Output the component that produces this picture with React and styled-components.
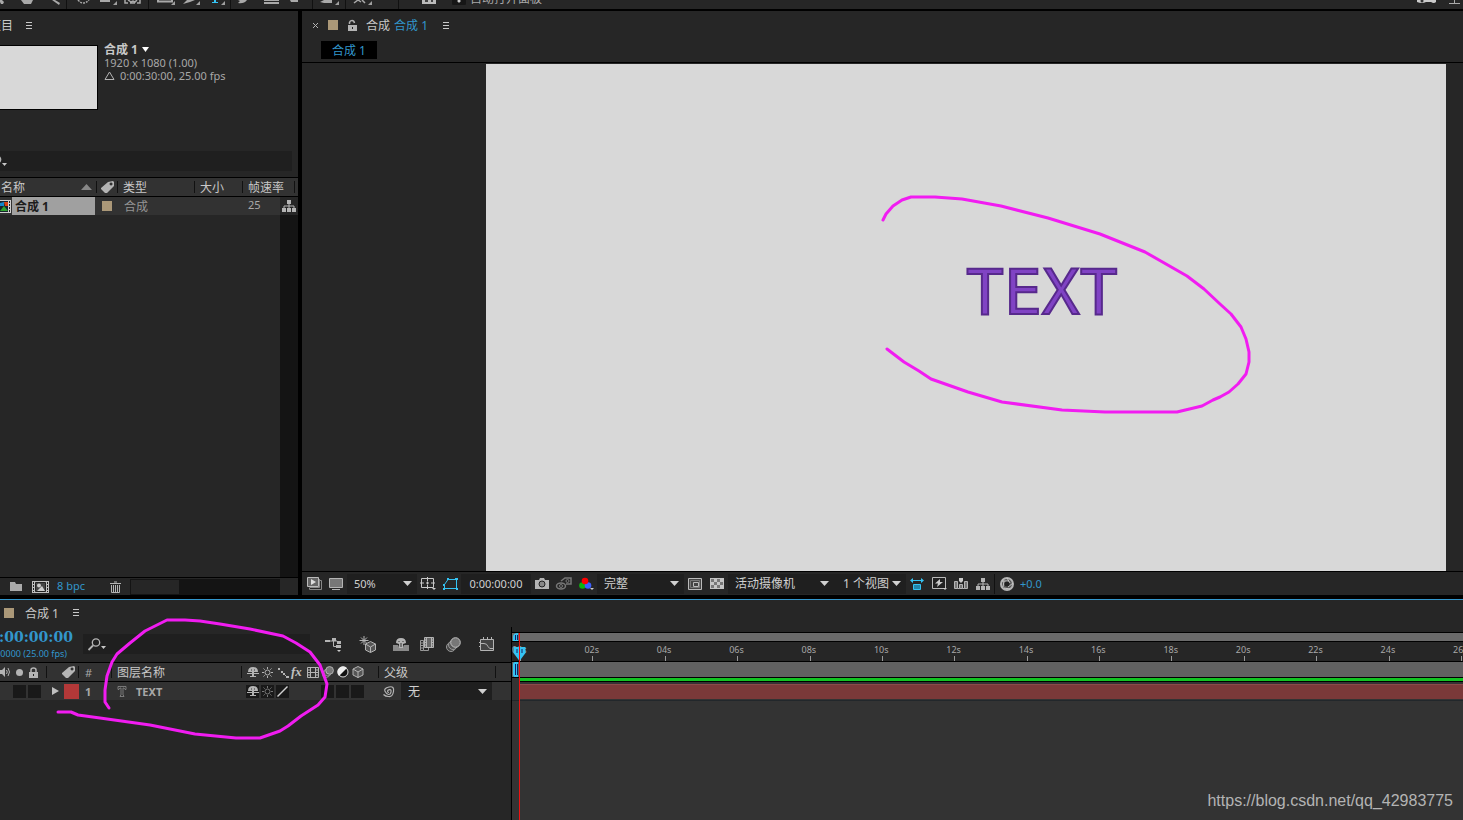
import React from "react";
import styled, { createGlobalStyle } from "styled-components";

const c = {
  panel: "#262626",
  row: "#323232",
  field: "#1f1f1f",
  well: "#191919",
  line: "#000000",
  text: "#a8a8a8",
  bright: "#c8c8c8",
  blue: "#3296cc",
  cyan: "#35c3f3",
  sand: "#ab9878",
};

const Global = createGlobalStyle`
  * { box-sizing: border-box; }
  body {
    margin: 0;
    background: #000;
    color: ${c.text};
    font: 11px/13px "Noto Sans", "Noto Sans CJK SC", sans-serif;
  }
  button, input, select { font: inherit; color: inherit; }
`;

const Shell = styled.div`
  position: relative;
  display: flex;
  flex-direction: column;
  min-height: 100vh;
  overflow: hidden;
`;

/* ---------- shared parts ---------- */

const IconButton = styled.button`
  display: flex;
  flex: none;
  align-items: center;
  justify-content: center;
  width: ${(p) => p.$w || 22}px;
  height: ${(p) => p.$h || 20}px;
  padding: 0;
  border: 0;
  background: none;
`;

const Cjk = styled.span`
  padding-top: ${(p) => (p.$flat ? 0 : 2)}px;
  font-size: 12px;
  font-weight: ${(p) => (p.$bold ? 700 : 400)};
  line-height: ${(p) => (p.$flat ? 13 : 14)}px;
  color: ${(p) => p.$color || c.bright};
  white-space: nowrap;
`;

const Swatch = styled.span`
  flex: none;
  width: ${(p) => p.$size || 10}px;
  height: ${(p) => p.$size || 10}px;
  background: ${(p) => p.$color || c.sand};
`;

const Divider = styled.span`
  flex: none;
  width: 1px;
  height: ${(p) => p.$h || 12}px;
  background: #111;
`;

const Svg = styled.svg`
  display: block;
  flex: none;
  overflow: visible;
`;

function Icon({ w = 16, h = 16, children }) {
  return (
    <Svg width={w} height={h} viewBox={`0 0 ${w} ${h}`} fill="none" stroke="none" aria-hidden="true">
      {children}
    </Svg>
  );
}

const G = "#a9a9a9";

const MenuIcon = () => (
  <Icon w={7} h={9}><path d="M0 1.500h6M0 4.500h6M0 7.500h6" stroke={c.bright} /></Icon>
);
const Caret = () => <Icon w={9} h={5}><path d="M0 0h9L4.500 5z" fill="#d0d0d0" /></Icon>;
const TagIcon = () => (
  <Icon w={13} h={12}>
    <path fillRule="evenodd" d="M7 1l5-1 1 1v4L6 12H4L0 8V7zM10 1.500a1.500 1.500 0 1 0 .1 0z" fill="#b4b4b4" />
  </Icon>
);
const TreeIcon = () => (
  <Icon w={14} h={12}>
    <path d="M5 0h4v4H5zM0 8h4v4H0zM5 8h4v4H5zM10 8h4v4h-4z" fill="#b4b4b4" />
    <path d="M7 4v4M2 8V6h10v2" stroke="#b4b4b4" />
  </Icon>
);
const LockIcon = ({ open }) => (
  <Icon w={9} h={11}>
    <path d={open ? "M1.500 4V2.500Q2 .5 4 .5T6.500 3" : "M2 5V3Q2 1 4.500 1T7 3v2"} stroke="#b4b4b4" strokeWidth="1.500" />
    <path d="M0 5h9v6H0z" fill="#b4b4b4" />
    <path d="M4 7h1v2H4z" fill="#222" />
  </Icon>
);
const SearchIcon = () => (
  <Icon w={18} h={13}>
    <circle cx="8" cy="4.500" r="3.700" stroke="#b4b4b4" strokeWidth="1.300" />
    <path d="M5 7.500L.5 12" stroke="#b4b4b4" strokeWidth="1.800" />
    <path d="M13 8h5l-2.500 3z" fill="#c8c8c8" />
  </Icon>
);
const ShyIcon = () => (
  <Icon w={12} h={12}>
    <path d="M1 6Q1 1 6 1t5 5zM0 7h12v1H0zM3 10h6v1H3zM5 6h2v5H5z" fill="#b4b4b4" />
    <path d="M4 4h1M7 4h1" stroke="#333" />
  </Icon>
);
const SunIcon = ({ dim }) => (
  <Icon w={11} h={11}>
    <circle cx="5.500" cy="5.500" r="2.500" stroke={dim ? "#777" : "#b4b4b4"} />
    <path d="M5.500 0v2M5.500 9v2M0 5.500h2M9 5.500h2M1.500 1.500l1.200 1.200M8.300 8.300l1.200 1.200M1.500 9.500l1.200-1.200M8.300 2.700l1.200-1.200" stroke={dim ? "#777" : "#b4b4b4"} />
  </Icon>
);
const FilmIcon = () => (
  <Icon w={12} h={11}>
    <path d="M.5.5h11v10H.5zM3.500 0v11M8.500 0v11M3.500 5.500h5M0 3h3M0 5.500h3M0 8h3M9 3h3M9 5.500h3M9 8h3" stroke="#b4b4b4" />
  </Icon>
);
const CubeIcon = () => (
  <Icon w={12} h={12}>
    <path d="M6 .5l5 2.500v6l-5 2.500L1 9V3z" fill="#555" stroke="#b4b4b4" />
    <path d="M1 3l5 3 5-3M6 6v6" stroke="#b4b4b4" />
  </Icon>
);
const BlurIcon = ({ s = 12 }) => (
  <Svg width={s} height={s} viewBox="0 0 15 15" aria-hidden="true">
    <circle cx="5" cy="10" r="4.500" fill="#444" stroke="#999" />
    <circle cx="7" cy="8" r="4.500" fill="#555" stroke="#999" />
    <circle cx="9.500" cy="5.500" r="4.800" fill="#777" stroke="#c0c0c0" />
  </Svg>
);

/* ---------- drop-down ---------- */

const SelectBox = styled.span`
  display: flex;
  flex: none;
  align-items: center;
  width: ${(p) => p.$w}px;
  height: ${(p) => p.$h || 20}px;
  padding-right: ${(p) => p.$end || 5}px;
  background: ${c.field};
`;
const SelectField = styled.select`
  appearance: none;
  flex: 1;
  min-width: 0;
  height: 18px;
  padding: 0 0 0 7px;
  border: 0;
  background: transparent;
  color: #d0d0d0;
  font-size: ${(p) => (p.$cjk ? 12 : 11)}px;
`;
function DropDown({ w, h, end, cjk, label, value }) {
  return (
    <SelectBox $w={w} $h={h} $end={end}>
      <SelectField $cjk={cjk} aria-label={label} defaultValue={value}>
        <option>{value}</option>
      </SelectField>
      <Caret />
    </SelectBox>
  );
}

/* ---------- top tool strip ---------- */

const ToolStrip = styled.header`
  height: 11px;
  overflow: hidden;
  background: ${c.panel};
  border-bottom: 2px solid #000;
`;
const ToolRow = styled.div`
  display: flex;
  align-items: flex-end;
  height: 22px;
  margin-top: -13px;
`;
const ToolButton = styled(IconButton)`
  align-items: flex-end;
  justify-content: flex-start;
  height: 9px;
`;
const AutoOpen = styled.label`
  display: flex;
  align-items: center;
  align-self: center;
  gap: 4px;
`;
const Tick = styled.input`
  appearance: none;
  width: 14px;
  height: 14px;
  margin: 0;
  border-radius: 1px;
  background: radial-gradient(circle at 7px 10px, #ccc 1px, #161616 2px);
`;
const Push = styled.span`
  flex: 1;
`;
const Corner = ({ x }) => <path d={`M${x} 5v-4l-4 4z`} fill="#a0a0a0" />;

const tools = [
  { id: "选取", w: 21, art: <path d="M0 0h2l2 2-1 2H1L0 2z" fill={G} /> },
  { id: "手形", w: 30, art: <path d="M0 0h12l-2 4H3z" fill={G} /> },
  { id: "缩放", w: 15, art: <path d="M1 0h3l5 3-1 2z" fill={G} />, line: true },
  { id: "旋转", w: 22, pad: 10, art: <path d="M1 0Q6 6 12 0" stroke={G} strokeWidth="1.500" strokeDasharray="2 1" /> },
  { id: "摄像机", w: 25, art: <><path d="M1 0h10v2H1z" fill={G} /><Corner x={18} /></> },
  { id: "锚点", w: 24, art: <path d="M1 0v3h3M13 3h3V0M6 3h5M4 0l3 2 2-1 2 1 2-2" stroke={G} strokeWidth="1.500" />, line: true },
  { id: "矩形", w: 24, pad: 9, art: <><path d="M0 0v1.500h14V0" stroke={G} strokeWidth="2" /><Corner x={17} /></> },
  { id: "钢笔", w: 30, art: <><path d="M1 4L5 0h8L8 2z" fill={G} /><Corner x={18} /></> },
  { id: "文字", w: 18, art: <><path d="M2 0h2v2h2v1H0V2h2z" fill={c.cyan} /><Corner x={13} /></>, line: true },
  { id: "画笔", w: 27, pad: 6, art: <path d="M1 0h9Q7 4 1 3l2-2z" fill={G} /> },
  { id: "图章", w: 25, art: <path d="M0 0h15v1H0zM0 2h15v2H0z" fill={G} /> },
  { id: "橡皮擦", w: 23, art: <path d="M1 0h8v2H2z" fill={G} />, line: true },
  { id: "Roto", w: 25, pad: 7, art: <><path d="M0 2l4-2h8v3H4z" fill={G} /><Corner x={19} /></>, line: true },
  { id: "操控", w: 44, pad: 8, art: <><path d="M0 3l4-3 3 2M8 0l3 3" stroke={G} strokeWidth="1.500" /><Corner x={18} /></>, line: true },
  { id: "对齐", w: 30, pad: 23, art: <><path d="M0 0h14v4H0z" fill="#bbb" /><path d="M3 0h3v2H3zM9 0h2v2H9z" fill="#444" /></> },
];

const Gap = styled.span`
  flex: none;
  width: ${(p) => p.$w}px;
`;

function Toolbar() {
  return (
    <ToolStrip>
      <ToolRow>
        {tools.map((t) => (
          <React.Fragment key={t.id}>
            {t.pad ? <Gap $w={t.pad} /> : null}
            <ToolButton $w={t.w} aria-label={t.id}><Icon w={18} h={9}>{t.art}</Icon></ToolButton>
            {t.line ? <Divider $h={9} /> : null}
          </React.Fragment>
        ))}
        <AutoOpen>
          <Tick type="checkbox" defaultChecked />
          <Cjk $color={c.text}>自动打开面板</Cjk>
        </AutoOpen>
        <Push />
        <ToolButton $w={32} aria-label="同步设置">
          <Icon w={20} h={9}><path d="M0 0h19v2q-2 2-5 0H9Q5 4 0 2z" fill="#ccc" /><circle cx="5" cy="1" r="1.500" fill="#333" /></Icon>
        </ToolButton>
        <ToolButton $w={14} aria-label="搜索帮助">
          <Icon w={12} h={9}><path d="M0 3.500h11M5.500 0v3" stroke={G} /></Icon>
        </ToolButton>
      </ToolRow>
    </ToolStrip>
  );
}

/* ---------- project panel ---------- */

const Workspace = styled.div`
  display: flex;
  flex: 1;
  gap: 4px;
  min-height: 0;
  padding-bottom: 4px;
`;
const Project = styled.section`
  display: flex;
  flex: none;
  flex-direction: column;
  width: 314px;
  margin-left: -16px;
  background: ${c.panel};
`;
const ProjectTab = styled.div`
  display: flex;
  align-items: center;
  gap: 13px;
  height: 28px;
  padding-left: 5px;
`;
const Summary = styled.div`
  display: flex;
  gap: 6px;
  height: 112px;
  padding-top: 6px;
`;
const Thumb = styled.div`
  width: 114px;
  height: 65px;
  border: 1px solid #000;
  background: #d8d8d8;
`;
const Facts = styled.div`
  display: flex;
  flex-direction: column;
  height: 40px;
  margin-top: -2px;
  white-space: nowrap;
`;
const Fact = styled.div`
  display: flex;
  align-items: center;
  gap: 4px;
  height: 13px;
`;
const Find = styled.label`
  display: flex;
  align-items: center;
  height: ${(p) => p.$h || 20}px;
  margin: ${(p) => p.$m || "0"};
  padding-left: 5px;
  background: ${c.field};
`;
const FindInput = styled.input`
  flex: 1;
  min-width: 0;
  border: 0;
  outline: 0;
  background: transparent;
`;
const DataTable = styled.table`
  width: 100%;
  border-collapse: collapse;
  table-layout: fixed;
  border-top: 1px solid #000;
`;
const HeadCell = styled.th`
  height: 19px;
  padding: 0 0 0 ${(p) => (p.$pad === undefined ? 6 : p.$pad)}px;
  border-bottom: 1px solid #000;
  background: ${c.row};
  text-align: left;
  font-weight: 400;
`;
const Cell = styled.td`
  height: 18px;
  padding: 0 0 0 ${(p) => (p.$pad === undefined ? 6 : p.$pad)}px;
  background: ${(p) => p.$bg || c.row};
`;
const CellRow = styled.div`
  display: flex;
  align-items: center;
  justify-content: ${(p) => p.$just || "flex-start"};
  gap: ${(p) => p.$gap || 0}px;
  height: 18px;
`;
const Selected = styled.span`
  display: flex;
  flex: 1;
  align-items: center;
  height: 18px;
  margin-right: 1px;
  padding-left: 3px;
  background: #a0a0a0;
`;
const Rate = styled.div`
  padding-bottom: 3px;
`;
const Items = styled.div`
  display: flex;
  flex: 1;
`;
const Track = styled.div`
  width: 18px;
  margin-left: auto;
  background: #141414;
`;
const ProjectBar = styled.footer`
  display: flex;
  align-items: center;
  height: 18px;
  padding-left: 20px;
  border-top: 1px solid #000;
`;
const Depth = styled.button`
  width: 44px;
  padding: 0 0 3px;
  border: 0;
  background: none;
  color: ${c.blue};
  text-align: left;
`;
const ScrollX = styled.div`
  width: 150px;
  height: 16px;
  margin-left: auto;
  margin-right: 18px;
  padding: 1px;
  background: #141414;
`;
const ScrollThumb = styled.div`
  width: 48px;
  height: 14px;
  background: ${c.panel};
`;

function ProjectPanel() {
  return (
    <Project>
      <ProjectTab><Cjk>项目</Cjk><MenuIcon /></ProjectTab>
      <Summary>
        <Thumb />
        <Facts>
          <Fact><Cjk $bold $flat>合成 1</Cjk><Icon w={7} h={5}><path d="M0 0h7L3.500 5z" fill="#fff" /></Icon></Fact>
          <Fact>1920 x 1080 (1.00)</Fact>
          <Fact><Icon w={12} h={9}><path d="M1 8.500L5.500 1 10 8.500z" stroke="#b4b4b4" /></Icon>0:00:30:00, 25.00 fps</Fact>
        </Facts>
      </Summary>
      <Find $m="0 6px 6px 0"><SearchIcon /><FindInput aria-label="搜索项目" /></Find>
      <DataTable>
        <colgroup>
          <col width="112" /><col width="21" /><col width="77" /><col width="48" /><col width="38" /><col />
        </colgroup>
        <thead>
          <tr>
            <HeadCell $pad={17}><CellRow $just="space-between"><Cjk>名称</Cjk><Icon w={15} h={6}><path d="M0 6l5.500-6L11 6z" fill="#888" /></Icon></CellRow></HeadCell>
            <HeadCell $pad={0}><CellRow $gap={4}><Divider /><TagIcon /></CellRow></HeadCell>
            <HeadCell $pad={0}><CellRow $gap={5}><Divider /><Cjk>类型</Cjk></CellRow></HeadCell>
            <HeadCell $pad={0}><CellRow $gap={5}><Divider /><Cjk>大小</Cjk></CellRow></HeadCell>
            <HeadCell $pad={0} colSpan={2}><CellRow $gap={5}><Divider /><Cjk>帧速率</Cjk><Gap $w={0} /><Divider /></CellRow></HeadCell>
          </tr>
        </thead>
        <tbody>
          <tr>
            <Cell $pad={16}>
              <CellRow>
                <Icon w={12} h={13}>
                  <path d="M0 0h11v13H0z" fill="#d0d0d0" /><path d="M0 1h8v11H0z" fill="#16222c" />
                  <path d="M0 3l4-1v4H0z" fill="#1488cc" /><path d="M4 2h4v4H5z" fill="#d84315" /><path d="M0 11l4-5 4 5z" fill="#2fa32f" />
                  <path d="M9.500 1v11" stroke="#222" strokeDasharray="2 1" />
                </Icon>
                <Selected><Cjk $bold $color="#1c1c1c">合成 1</Cjk></Selected>
              </CellRow>
            </Cell>
            <Cell $pad={6}><Swatch as="div" /></Cell>
            <Cell $pad={7}><CellRow><Cjk $color="#949494">合成</Cjk></CellRow></Cell>
            <Cell />
            <Cell><Rate>25</Rate></Cell>
            <Cell $bg={c.panel} $pad={2}><TreeIcon /></Cell>
          </tr>
        </tbody>
      </DataTable>
      <Items><Track /></Items>
      <ProjectBar>
        <IconButton $w={24} $h={16} aria-label="新建文件夹"><Icon w={12} h={9}><path d="M0 0h5l1 2h6v7H0z" fill="#aaa" /></Icon></IconButton>
        <IconButton $w={24} $h={16} aria-label="新建合成">
          <Icon w={17} h={12}>
            <path d="M0 0h17v12H0z" fill="#c0c0c0" /><path d="M3.500 1.500h10v9h-10z" fill="#444" stroke="#222" />
            <path d="M1.500 1v10M15.500 1v10" stroke="#222" strokeDasharray="2 1" /><circle cx="7" cy="4.500" r="2" fill="#ccc" /><path d="M5 10l5-5 3 5z" fill="#ccc" />
          </Icon>
        </IconButton>
        <Gap $w={5} />
        <Depth>8 bpc</Depth>
        <IconButton $w={28} $h={16} aria-label="删除">
          <Icon w={11} h={12}><path d="M0 2.500h11M4 1h3M1.500 4v7.500h8V4M3.500 4v7M5.500 4v7M7.500 4v7" stroke="#b4b4b4" /></Icon>
        </IconButton>
        <ScrollX><ScrollThumb /></ScrollX>
      </ProjectBar>
    </Project>
  );
}

/* ---------- composition viewer ---------- */

const Viewer = styled.section`
  display: flex;
  flex: 1;
  flex-direction: column;
  min-width: 0;
  background: ${c.panel};
`;
const ViewerTab = styled.div`
  display: flex;
  align-items: center;
  height: 28px;
  padding-left: 10px;
`;
const Crumbs = styled.nav`
  height: 24px;
  padding: 2px 0 0 19px;
  border-bottom: 1px solid #000;
`;
const Crumb = styled.button`
  display: flex;
  align-items: center;
  justify-content: center;
  width: 56px;
  height: 18px;
  padding: 0;
  border: 0;
  background: #000;
`;
const Pasteboard = styled.div`
  display: flex;
  flex: 1;
  margin-top: 1px;
  padding: 0 17px 0 184px;
`;
const Stage = styled.div`
  flex: 1;
  background: #d8d8d8;
`;
const StageText = styled.div`
  width: 152px;
  margin: 191px 0 0 480px;
  color: #8043c4;
  -webkit-text-stroke: 2px #57298c;
  font: 63px/76px "DejaVu Sans Mono", monospace;
  white-space: nowrap;
`;
const ViewerBar = styled.footer`
  display: flex;
  align-items: center;
  height: 24px;
  padding-left: 1px;
  border-top: 1px solid #000;
  white-space: nowrap;
`;
const TimeField = styled.button`
  width: 70px;
  height: 20px;
  padding: 0;
  border: 0;
  background: ${c.field};
  color: #d0d0d0;
`;
const Exposure = styled.button`
  padding: 0 0 0 1px;
  border: 0;
  background: none;
  color: ${c.blue};
`;

function ViewerPanel() {
  return (
    <Viewer>
      <ViewerTab>
        <IconButton $w={6} aria-label="关闭"><Icon w={5} h={5}><path d="M0 0l5 5M5 0L0 5" stroke="#b4b4b4" /></Icon></IconButton>
        <Gap $w={10} /><Swatch /><Gap $w={9} />
        <IconButton $w={10} aria-label="锁定"><LockIcon open /></IconButton>
        <Gap $w={9} /><Cjk>合成</Cjk><Gap $w={4} /><Cjk $color={c.blue}>合成 1</Cjk><Gap $w={15} /><MenuIcon />
      </ViewerTab>
      <Crumbs><Crumb><Cjk $color={c.blue}>合成 1</Cjk></Crumb></Crumbs>
      <Pasteboard><Stage><StageText>TEXT</StageText></Stage></Pasteboard>
      <ViewerBar>
        <IconButton aria-label="始终预览此视图">
          <Icon w={15} h={13}><path d="M2.500 11v1.500h12v-9H13M12.500 2v8.500h-10" stroke="#888" /><path d="M.5.5h11v9H.5z" fill="#666" stroke="#bbb" /><path d="M4 2l5 3-5 3z" fill="#ddd" /></Icon>
        </IconButton>
        <IconButton aria-label="主查看器">
          <Icon w={14} h={12}><path d="M.5.5h13v9H.5z" fill="#777" stroke="#b4b4b4" /><path d="M3 11h8v1H3z" fill="#b4b4b4" /></Icon>
        </IconButton>
        <DropDown w={70} label="放大率" value="50%" />
        <IconButton aria-label="网格和参考线">
          <Icon w={16} h={13}><path d="M1.500 1.500h12v9h-12zM7.500 0v4M7.500 8v4M0 6h4M11 6h4M6 6h3M7.500 4.500v3" stroke="#c8c8c8" /><path d="M12 11h4l-2 2z" fill="#ccc" /></Icon>
        </IconButton>
        <IconButton aria-label="蒙版可见性">
          <Icon w={15} h={12}><path d="M1.500 10.500v-4L5 1.500h8.500v9z" stroke={c.cyan} /><path d="M0 10h2v2H0zM0 6h2v2H0zM4 0h2v2H4zM12 0h3v2h-3zM13 10h2v2h-2z" fill={c.cyan} /></Icon>
        </IconButton>
        <TimeField>0:00:00:00</TimeField>
        <IconButton aria-label="快照">
          <Icon w={14} h={11}><path d="M0 2h4l1-2h4l1 2h4v9H0z" fill="#b4b4b4" /><circle cx="7" cy="6" r="3" fill="#888" stroke="#222" /></Icon>
        </IconButton>
        <IconButton aria-label="显示快照">
          <Icon w={16} h={13}><ellipse cx="5" cy="9" rx="4.500" ry="3" stroke="#777" strokeWidth="1.500" /><circle cx="5" cy="9" r="1.500" stroke="#777" /><path d="M5 4L9 1h6v6h-5" stroke="#777" strokeWidth="1.500" /><circle cx="11.500" cy="4" r="1.500" stroke="#777" /></Icon>
        </IconButton>
        <IconButton aria-label="通道">
          <Icon w={15} h={13}><circle cx="3.500" cy="8.500" r="3.300" fill="#0cb50c" /><circle cx="9" cy="8.500" r="3.300" fill="#3d5fff" /><circle cx="6" cy="4" r="3.300" fill="#f00" /><path d="M11 11h4l-2 2z" fill="#ccc" /></Icon>
        </IconButton>
        <DropDown w={87} cjk label="分辨率" value="完整" />
        <IconButton aria-label="目标区域">
          <Icon w={14} h={12}><path d="M.5.5h13v11H.5z" fill="#444" stroke="#bbb" /><path d="M2.500 2.500h9v7h-9z" stroke="#777" /><path d="M5.500 4.500h5v4h-5z" fill="#444" stroke="#bbb" /></Icon>
        </IconButton>
        <IconButton aria-label="透明网格">
          <Icon w={14} h={11}><path d="M0 0h14v11H0z" fill="#c4c4c4" /><path d="M1 1h3v3H1zM7 1h3v3H7zM4 4h3v3H4zM10 4h3v3h-3zM1 7h3v3H1zM7 7h3v3H7z" fill="#777" /></Icon>
        </IconButton>
        <DropDown w={108} end={7} cjk label="3D 视图" value="活动摄像机" />
        <DropDown w={70} cjk label="视图布局" value="1 个视图" />
        <IconButton aria-label="像素长宽比">
          <Icon w={14} h={12}><path d="M0 2.500L3 0v2h8V0l3 2.500L11 5V3H3v2z" fill={c.cyan} /><path d="M3.500 6.500h7v5h-7z" fill="#2186ab" stroke={c.cyan} /></Icon>
        </IconButton>
        <IconButton aria-label="快速预览">
          <Icon w={15} h={13}><path d="M.5.5h13v11H.5z" fill="#222" stroke="#bbb" /><path d="M8 2L3 6.500h3L5 10l6-5H8z" fill="#ccc" /><path d="M11 11h4l-2 2z" fill="#ccc" /></Icon>
        </IconButton>
        <IconButton aria-label="时间轴">
          <Icon w={14} h={11}><path d="M.5 10.500v-7h3v7zM5.500 10.500v-4h3v4zM10.500 10.500v-7h3v7z" fill="#777" stroke="#b4b4b4" /><path d="M3.500 10.500h2M8.500 10.500h2" stroke="#b4b4b4" /><path d="M5 0h4v3L7 5 5 3z" fill="#ccc" /></Icon>
        </IconButton>
        <IconButton aria-label="流程图"><TreeIcon /></IconButton>
        <Divider $h={20} />
        <IconButton $w={24} aria-label="重置曝光度">
          <Icon w={14} h={14}><circle cx="7" cy="7" r="6" fill="#555" stroke="#b4b4b4" strokeWidth="2" /><path d="M7 1l3 5M13 6l-5 4M10 12l-6-1M3 10l1-6M2 4l7 0" stroke="#c8c8c8" /><circle cx="7" cy="7" r="2.500" fill="#222" /></Icon>
        </IconButton>
        <Exposure>+0.0</Exposure>
      </ViewerBar>
    </Viewer>
  );
}

/* ---------- timeline ---------- */

const Timeline = styled.section`
  display: flex;
  flex: none;
  flex-direction: column;
  height: 221px;
  border-top: 1px solid ${c.blue};
  background: ${c.panel};
`;
const TimelineTab = styled.div`
  display: flex;
  align-items: center;
  height: 27px;
  padding: 0 0 2px 4px;
`;
const Split = styled.div`
  display: flex;
  flex: 1;
`;
const Layers = styled.div`
  flex: none;
  width: 528px;
  margin-left: -16px;
  border-right: 1px solid #000;
`;
const Controls = styled.div`
  display: flex;
  height: 35px;
`;
const Clock = styled.div`
  width: 99px;
  color: ${c.blue};
  text-align: right;
  white-space: nowrap;
`;
const ClockMain = styled.div`
  padding-right: 10px;
  font: 700 14px/21px "DejaVu Serif", serif;
`;
const ClockSub = styled.div`
  padding-right: 16px;
  font-size: 9px;
  line-height: 12px;
`;
const FindBox = styled(Find)`
  width: 227px;
`;
const Lamp = styled.span`
  display: flex;
  flex: none;
  align-items: center;
  justify-content: center;
  width: 13px;
  height: 13px;
  background: ${c.well};
`;
const Spot = styled.span`
  width: 7px;
  height: 7px;
  border-radius: 50%;
  background: #b4b4b4;
`;
const Fx = styled.i`
  width: 13px;
  color: #c0c0c0;
  font: italic 700 13px/14px "Liberation Serif", serif;
`;
const Strong = styled.b`
  font-weight: 700;
  color: #a8a8a8;
`;
const Slot = styled.span`
  display: flex;
  flex: none;
  align-items: center;
  justify-content: center;
  width: 15px;
`;
const Graph = styled.div`
  position: relative;
  flex: 1;
  min-width: 0;
  margin-top: 5px;
  overflow: hidden;
  background: #333;
`;
const Navigator = styled.div`
  height: 10px;
  border-top: 1px solid #000;
  border-bottom: 1px solid #000;
  background: #6a6a6a;
`;
const Ruler = styled.div`
  display: grid;
  grid-template-columns: repeat(13, 1fr) 10px;
  height: 19px;
  padding-top: 2px;
  background: ${c.panel};
  font-size: 9px;
  line-height: 12px;
`;
const Mark = styled.div`
  white-space: nowrap;
  &::after {
    content: "";
    display: block;
    width: 1px;
    height: 5px;
    margin-left: 8px;
    background: #999;
  }
`;
const WorkArea = styled.div`
  height: 17px;
  border: solid #000;
  border-width: 1px 0;
  background: #616161;
`;
const Cached = styled.div`
  height: 4px;
  margin-left: 7px;
  border-bottom: 1px solid #000;
  background: #12c322;
`;
const LayerTrack = styled.div`
  height: 19px;
  padding: 2px 0 2px 7px;
  border-bottom: 1px solid #22272b;
`;
const LayerBar = styled.div`
  height: 15px;
  border-top: 1px solid #8a4a4a;
  background: #7a3939;
`;
const Playhead = styled.div`
  position: absolute;
  top: 1px;
  bottom: 0;
  left: 0;
  width: 14px;
`;
const Needle = styled.div`
  position: absolute;
  top: 0;
  bottom: 0;
  left: 7px;
  width: 1px;
  background: #f01010;
`;
const Watermark = styled.div`
  position: absolute;
  right: 10px;
  bottom: 9px;
  color: #b4b4b4;
  font: 16px/20px "Liberation Sans", Arial, sans-serif;
`;
const Scribble = styled.svg`
  position: absolute;
  inset: 0;
  width: 100%;
  height: 100%;
  pointer-events: none;
`;

const seconds = Array.from({ length: 14 }, (_, i) => String(i * 2).padStart(2, "0") + "s");

function TimelinePanel() {
  return (
    <Timeline>
      <TimelineTab><Swatch /><Gap $w={11} /><Cjk>合成 1</Cjk><Gap $w={14} /><MenuIcon /></TimelineTab>
      <Split>
        <Layers>
          <Controls>
            <Clock><ClockMain>0:00:00:00</ClockMain><ClockSub>00000 (25.00 fps)</ClockSub></Clock>
            <FindBox $m="7px 5px 8px 0"><SearchIcon /><FindInput aria-label="搜索图层" /></FindBox>
            <IconButton $w={36} $h={34} aria-label="合成微型流程图">
              <Icon w={17} h={13}><path d="M0 2h5v2H0zM7 0h4v3H7zM12 3h4v3h-4zM11 7h5v3h-5z" fill="#b4b4b4" /><path d="M5 3h7M8.500 3v5.500h3" stroke="#b4b4b4" /><path d="M12 12h4l-2 2z" fill="#ccc" /></Icon>
            </IconButton>
            <IconButton $w={34} $h={34} aria-label="草图 3D">
              <Icon w={18} h={17}><path d="M5 0v9M.5 4.500h9M2 1.500l6 6M8 1.500l-6 6" stroke="#b4b4b4" /><path d="M11.500 5.500l5 2.500v6l-5 2.500-5-2.500V8z" fill="#555" stroke="#b4b4b4" /><path d="M6.500 8l5 3 5-3M11.500 11v5.500" stroke="#b4b4b4" /></Icon>
            </IconButton>
            <IconButton $w={32} $h={34} aria-label="隐藏图层">
              <Icon w={16} h={13}><path d="M0 7h5l1 2h4l1-2h5v6H0z" fill="#8a8a8a" /><path d="M3 5Q3 0 8 0t5 5l-3 1v4H6V6z" fill="#b4b4b4" /><path d="M6 3v1M10 3v1M8 5v4" stroke="#333" /></Icon>
            </IconButton>
            <IconButton $w={20} $h={34} aria-label="帧混合">
              <Icon w={14} h={14}><path d="M4.500.5h9v10h-9z" fill="#666" stroke="#b4b4b4" /><path d="M6.500 0v11M11.500 0v11M4 3h2M4 5.500h2M4 8h2M12 3h2M12 5.500h2M12 8h2" stroke="#b4b4b4" /><path d="M.5 3.500h3v10h5v-2.500M.5 3.500v10h3M0 6h3M0 8.500h3M0 11h3" stroke="#999" /></Icon>
            </IconButton>
            <IconButton $w={32} $h={34} aria-label="运动模糊"><BlurIcon s={15} /></IconButton>
            <IconButton $w={36} $h={34} aria-label="图表编辑器">
              <Icon w={16} h={14}><path d="M1.500 2.500h13v11h-13z" fill="#444" stroke="#b4b4b4" /><path d="M0 5.500h2M0 9.500h2M4.500 0v3M8.500 0v3M12.500 0v3M2 6.500h3q3 0 4 3t5 2" stroke="#b4b4b4" /></Icon>
            </IconButton>
          </Controls>
          <DataTable>
            <colgroup>
              <col width="62" /><col width="32" /><col width="33" /><col width="130" /><col width="137" /><col width="117" /><col />
            </colgroup>
            <thead>
              <tr>
                <HeadCell $pad={16}>
                  <CellRow $gap={6}>
                    <Icon w={10} h={10}><path d="M0 3h2l3-3v10L2 7H0z" fill="#b4b4b4" /><path d="M6.500 3q1.500 2 0 4M8 1q3 4 0 8" stroke="#b4b4b4" /></Icon>
                    <Spot /><LockIcon />
                  </CellRow>
                </HeadCell>
                <HeadCell $pad={0}><CellRow $gap={15}><Divider /><TagIcon /></CellRow></HeadCell>
                <HeadCell $pad={0}><CellRow $gap={6}><Divider />#</CellRow></HeadCell>
                <HeadCell $pad={0}><CellRow $gap={5}><Divider /><Cjk>图层名称</Cjk></CellRow></HeadCell>
                <HeadCell $pad={0}>
                  <CellRow>
                    <Divider /><Gap $w={3} />
                    <Slot><ShyIcon /></Slot><Slot><SunIcon /></Slot>
                    <Slot><Icon w={12} h={11}><path d="M1 1h2v2H1zM4 4h2v2H4zM6 6h2v2H6zM9 9h3v2H9zM8 8h1v1H8z" fill="#b4b4b4" /></Icon></Slot>
                    <Slot><Fx>fx</Fx></Slot><Slot><FilmIcon /></Slot><Slot><BlurIcon /></Slot>
                    <Slot><Icon w={12} h={12}><circle cx="6" cy="6" r="5" fill="#111" stroke="#ddd" /><path d="M2 10A5.600 5.600 0 0 1 10 2z" fill="#eee" /></Icon></Slot>
                    <Slot><CubeIcon /></Slot>
                  </CellRow>
                </HeadCell>
                <HeadCell $pad={0}><CellRow $gap={5}><Divider /><Cjk>父级</Cjk></CellRow></HeadCell>
                <HeadCell $pad={0}><Divider as="div" /></HeadCell>
              </tr>
            </thead>
            <tbody>
              <tr>
                <Cell $pad={29}><CellRow $gap={2}><Lamp /><Lamp /></CellRow></Cell>
                <Cell $pad={6}><CellRow $gap={5}><Icon w={7} h={8}><path d="M0 0l7 4-7 4z" fill="#c0c0c0" /></Icon><Swatch $size={15} $color="#b33838" /></CellRow></Cell>
                <Cell $pad={7}><Strong>1</Strong></Cell>
                <Cell>
                  <CellRow $gap={9}>
                    <Icon w={10} h={11}><path d="M1 .5h8v3H8l-1-1.500H6v7l1 1v.5H3V10l1-1V2H3L2 3.500H1z" fill="#333" stroke="#8c8c8c" strokeWidth=".8" /></Icon>
                    <Strong>TEXT</Strong>
                  </CellRow>
                </Cell>
                <Cell $pad={5}>
                  <CellRow $gap={2}>
                    <Lamp><ShyIcon /></Lamp><Lamp><SunIcon dim /></Lamp>
                    <Lamp><Icon w={11} h={11}><path d="M.5 10.500l10-10" stroke="#d0d0d0" strokeWidth="1.400" /></Icon></Lamp>
                    <Gap $w={28} /><Lamp /><Lamp /><Lamp />
                  </CellRow>
                </Cell>
                <Cell $pad={5}>
                  <CellRow $gap={7}>
                    <Icon w={11} h={11}><path d="M6 6.500Q4.500 6.500 4.500 5.300T6.500 3.700 8 6 5.500 8.500 2 5.300 6 1t4.500 4.500-5 5Q2.500 10.500.5 8.500" stroke="#b4b4b4" strokeWidth="1.200" /></Icon>
                    <DropDown w={91} h={18} cjk label="父级" value="无" />
                  </CellRow>
                </Cell>
                <Cell />
              </tr>
            </tbody>
          </DataTable>
        </Layers>
        <Graph>
          <Navigator />
          <Ruler>{seconds.map((s) => <Mark key={s}>{s}</Mark>)}</Ruler>
          <WorkArea />
          <Cached />
          <LayerTrack><LayerBar /></LayerTrack>
          <Playhead>
            <Needle />
            <Icon w={14} h={46}>
              <path d="M6 0v8H1V4q0-4 5-4z" fill={c.cyan} /><path d="M3.500 2v5M5.500 2v5" stroke="#126" />
              <path d="M1.500 14h12v6l-6 8-6-8z" fill={c.cyan} /><path d="M5 16v4M7.500 16v4M10 16v4" stroke="#126" />
              <path d="M7.500 22v7" stroke="#222" />
              <path d="M6 29v15H2q-1-1-1-2V31q0-2 2-2z" fill={c.cyan} /><path d="M3.500 31v11M5.500 31v11" stroke="#126" />
            </Icon>
          </Playhead>
        </Graph>
      </Split>
    </Timeline>
  );
}

export default function App() {
  return (
    <Shell>
      <Global />
      <Toolbar />
      <Workspace>
        <ProjectPanel />
        <ViewerPanel />
      </Workspace>
      <TimelinePanel />
      <Scribble fill="none" stroke="#f11cf1" strokeWidth="3" strokeLinecap="round" strokeLinejoin="round" aria-hidden="true">
        <path d="M883 220L886 214 893 206 902 200 911 197 935 197 962 199 1001 206 1048 218 1100 234 1145 252 1187 276 1204 289 1220 304 1231 314 1241 327 1246 339 1249 352 1249 362 1246 374 1238 384 1229 392 1220 397 1213 400 1202 406 1177 412 1105 412 1062 410 1002 402 968 392 931 379 919 371 904 362 887 349" />
        <path d="M58 712L71 712 78 715 100 718 150 725 195 734 236 738 260 738 280 731 288 726 301 716 318 705 325 697 327 684 320 665 310 652 296 643 283 636 250 629 220 624 200 621 185 620 167 620 145 631 130 643 117 654 112 662 107 676 105 690 105 702 109 708" />
      </Scribble>
      <Watermark>https://blog.csdn.net/qq_42983775</Watermark>
    </Shell>
  );
}
